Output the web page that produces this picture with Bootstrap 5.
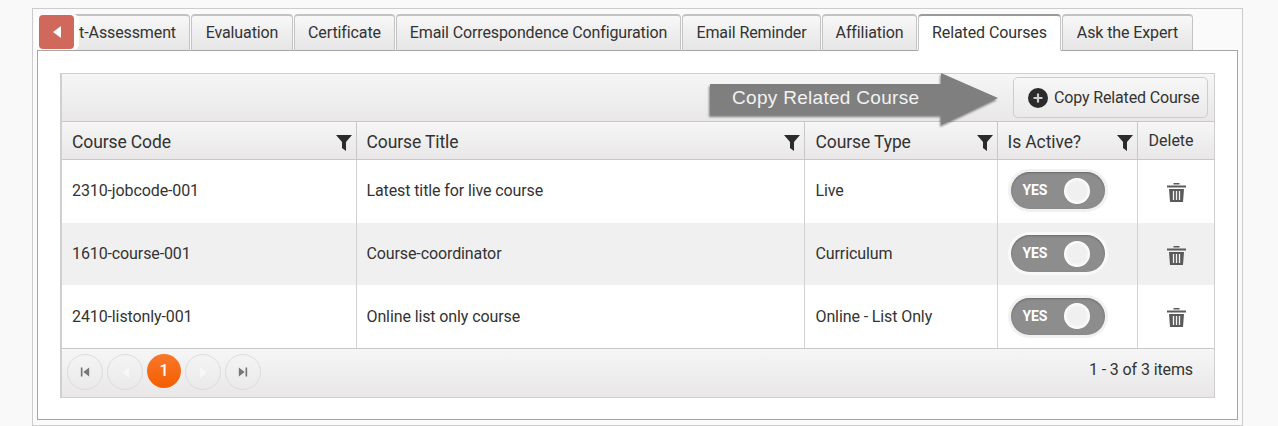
<!DOCTYPE html>
<html lang="en">
<head>
<meta charset="UTF-8">
<title>Related Courses</title>
<link rel="stylesheet" href="https://cdn.jsdelivr.net/npm/bootstrap@5.3.0/dist/css/bootstrap.min.css">
<style>
    html, body { height: 426px; overflow: hidden; }
    body { background: #f9f9f9; font-family: Roboto, sans-serif; color: #333; padding-top: 8px; letter-spacing: -.11px; }

    .outer-panel { position: relative; margin: 0 35px 0 32px; height: 418px; background: #fafafa; border: 1px solid #ccc; padding: 5px 4px 5px 4px; }

    /* tabs */
    .tab-strip { height: 36px; flex-wrap: nowrap; border: 0; padding-left: 3px; gap: 1px; }
    .tab-strip .nav-link { height: 37px; margin: 0; padding: 0 14px; display: flex; align-items: center; justify-content: center; white-space: nowrap; overflow: hidden; font-size: 16px; color: #333; background: linear-gradient(#f8f8f8, #e7e5e5); border: 1px solid #c4c4c4; border-top: 2px solid #c2c2c2; border-bottom: 1px solid #a5a5a5; border-radius: 4px 4px 0 0; }
    .tab-strip .nav-link.active { background: #fff; color: #333; border-color: #c4c4c4; border-top-color: #9a9a9a; border-bottom-color: #fff; position: relative; z-index: 2; }
    .tab-clip { width: 150px; justify-content: flex-end !important; padding-right: 13px !important; }
    .tab-eval { width: 102px; }
    .tab-cert { width: 101px; }
    .tab-mail { width: 285px; }
    .tab-remind { width: 139px; }
    .tab-aff { width: 95px; }
    .tab-rel { width: 143px; }
    .tab-ask { width: 131px; }

    .back-btn { position: absolute; left: 1px; top: 5px; width: 45px; height: 36px; background: #fff; opacity: 1; z-index: 3; border: 0; padding: 0 5px 0 5px; }
    .back-face { display: flex; align-items: center; justify-content: center; width: 35px; height: 34px; background: #d0695c; border-radius: 4px; }

    .tab-body { height: 370px; background: #fff; border: 1px solid #a5a5a5; padding: 22px 22px 0 22px; }

    /* grid */
    .grid-box { height: 325px; border: 1px solid #cfcfcf; border-left-width: 2px; position: relative; }
    .grid-bar { height: 48px; padding: 3px 6px 0 0; background: linear-gradient(#f6f6f6, #e9e7e8); border-bottom: 1px solid #c8c8c8; }
    .copy-btn { width: 195px; height: 41px; padding: 0 0 0 14px; gap: 6px; font-size: 16px; letter-spacing: -.15px; color: #333; background: linear-gradient(#f7f7f7, #ebe9ea); border: 1px solid #cdcdcd; border-radius: 5px; }

    .course-grid { table-layout: fixed; width: 100%; margin: 0; border-collapse: collapse; --bs-table-bg: transparent; color: #333; }
    .course-grid th { height: 37px; padding: 3px 10px 0 10px; font-size: 17.5px; font-weight: 400; color: #333; vertical-align: middle; background: linear-gradient(#f6f6f6, #e9e7e8); border-bottom: 1px solid #c8c8c8; border-right: 1px solid #c8c8c8; }
    .course-grid th:last-child, .course-grid td:last-child { border-right: 0; }
    .course-grid td { height: 63px; padding: 0 10px; font-size: 16px; vertical-align: middle; border-bottom: 0; border-right: 1px solid #d2d2d2; }
    .course-grid tbody tr:first-child td { height: 64px; }
    .course-grid tbody tr:nth-child(2) td { height: 62px; }
    .course-grid td:last-child { padding-left: 12px; }
    .course-grid th:nth-child(3), .course-grid td:nth-child(3) { padding-left: 11px; }
    .course-grid tbody tr:nth-child(even) td { background: #f0f0f0; }
    .course-grid th.th-small { font-size: 16px; padding: 2px 0 0 11px; letter-spacing: 0; }
    .col-code { width: 294px; }
    .col-title { width: 448px; }
    .col-type { width: 193px; }
    .col-active { width: 140px; }

    .th-inner { display: flex; align-items: center; justify-content: space-between; }
    .filter-ico { margin-right: -6px; margin-top: 3px; }

    .yes-toggle { display: flex; align-items: center; width: 94px; height: 37px; margin: 0 0 1px 3px; padding: 0 15px 0 12px; justify-content: space-between; border-radius: 19px; background: #8d8d8d; color: #fff; font-size: 14px; font-weight: 700; box-shadow: 0 0 0 3px #f1f1f1, inset 0 1px 2px rgba(0,0,0,.25); }
    .course-grid tbody tr:nth-child(even) .yes-toggle { box-shadow: 0 0 0 3px #f9f9f9, inset 0 1px 2px rgba(0,0,0,.25); }
    .yes-knob { width: 26px; height: 26px; border-radius: 50%; background: radial-gradient(circle, #f0f0f0 50%, #fff 70%); }

    .grid-foot { height: 49px; margin-top: 0; padding: 5px 21px 0 5px; background: linear-gradient(#f6f6f6, #e9e7e8); border-top: 1px solid #c8c8c8; font-size: 16px; }
    .grid-foot .pager-row { gap: 4px; }
    .pager-dot { width: 36px; height: 36px; border-radius: 50%; border: 1px solid #dcdcdc; display: flex; align-items: center; justify-content: center; }
    .pager-on { width: 34px; height: 34px; border: 0; background: linear-gradient(#f9782a, #f55d00); color: #fff; font-size: 16px; font-weight: 500; }
    .pager-count { line-height: 32px; }

    .callout { position: absolute; left: 646px; top: -1px; width: 292px; height: 58px; pointer-events: none; z-index: 4; }
    .callout svg { filter: drop-shadow(-1px 2px 1px rgba(0,0,0,.45)); }
    .callout-label { position: absolute; left: 24px; top: 12px; font-family: "Liberation Sans", sans-serif; font-size: 19px; letter-spacing: .3px; line-height: 26px; color: #f2f2f2; white-space: nowrap; }
</style>
</head>
<body>
<div class="outer-panel">
    <ul class="nav nav-tabs tab-strip">
        <li class="nav-item"><a class="nav-link tab-clip" href="#">Post-Assessment</a></li>
        <li class="nav-item"><a class="nav-link tab-eval" href="#">Evaluation</a></li>
        <li class="nav-item"><a class="nav-link tab-cert" href="#">Certificate</a></li>
        <li class="nav-item"><a class="nav-link tab-mail" href="#">Email Correspondence Configuration</a></li>
        <li class="nav-item"><a class="nav-link tab-remind" href="#">Email Reminder</a></li>
        <li class="nav-item"><a class="nav-link tab-aff" href="#">Affiliation</a></li>
        <li class="nav-item"><a class="nav-link active tab-rel" href="#">Related Courses</a></li>
        <li class="nav-item"><a class="nav-link tab-ask" href="#">Ask the Expert</a></li>
    </ul>
    <button class="btn back-btn" type="button" aria-label="Scroll back">
        <span class="back-face">
            <svg width="10" height="12" viewBox="0 0 10 12"><path d="M9 0v12L1 6z" fill="#fff"/></svg>
        </span>
    </button>

    <div class="tab-body">
        <div class="grid-box">
            <div class="grid-bar d-flex justify-content-end">
                <button class="btn copy-btn d-flex align-items-center" type="button">
                    <svg width="20" height="20" viewBox="0 0 20 20"><circle cx="10" cy="10" r="10" fill="#2b2b2b"/><path d="M10 5.500v9M5.500 10h9" stroke="#ccc" stroke-width="2.200"/></svg>
                    Copy Related Course
                </button>
            </div>

            <div class="callout">
                <svg width="292" height="58" viewBox="0 0 292 58">
                    <path d="M2 11h231V0l57 25-57 27V42H2z" fill="#7f7f7f"/>
                </svg>
                <span class="callout-label">Copy Related Course</span>
            </div>

            <table class="table course-grid">
                <colgroup>
                    <col class="col-code"><col class="col-title"><col class="col-type"><col class="col-active"><col>
                </colgroup>
                <thead>
                    <tr>
                        <th><div class="th-inner">Course Code <svg class="filter-ico" width="16" height="16" viewBox="0 0 16 16"><path d="M0 0h16L10 7v9l-4-3V7z" fill="#2b2b2b"/></svg></div></th>
                        <th><div class="th-inner">Course Title <svg class="filter-ico" width="16" height="16" viewBox="0 0 16 16"><path d="M0 0h16L10 7v9l-4-3V7z" fill="#2b2b2b"/></svg></div></th>
                        <th><div class="th-inner">Course Type <svg class="filter-ico" width="16" height="16" viewBox="0 0 16 16"><path d="M0 0h16L10 7v9l-4-3V7z" fill="#2b2b2b"/></svg></div></th>
                        <th><div class="th-inner">Is Active? <svg class="filter-ico" width="16" height="16" viewBox="0 0 16 16"><path d="M0 0h16L10 7v9l-4-3V7z" fill="#2b2b2b"/></svg></div></th>
                        <th class="th-small">Delete</th>
                    </tr>
                </thead>
                <tbody>
                    <tr>
                        <td>2310-jobcode-001</td>
                        <td>Latest title for live course</td>
                        <td>Live</td>
                        <td><div class="yes-toggle">YES<span class="yes-knob"></span></div></td>
                        <td class="text-center"><svg width="19" height="20" viewBox="0 0 19 20"><path d="M6.500 2.500V1h6v1.500M0 3.500h19v2H0zM2 7h15l-1 13H3z" fill="#5a5a5a"/><path d="M6.500 9v9M9.500 9v9M12.500 9v9" stroke="#f4f4f4" stroke-width="1.300"/></svg></td>
                    </tr>
                    <tr>
                        <td>1610-course-001</td>
                        <td>Course-coordinator</td>
                        <td>Curriculum</td>
                        <td><div class="yes-toggle">YES<span class="yes-knob"></span></div></td>
                        <td class="text-center"><svg width="19" height="20" viewBox="0 0 19 20"><path d="M6.500 2.500V1h6v1.500M0 3.500h19v2H0zM2 7h15l-1 13H3z" fill="#5a5a5a"/><path d="M6.500 9v9M9.500 9v9M12.500 9v9" stroke="#f4f4f4" stroke-width="1.300"/></svg></td>
                    </tr>
                    <tr>
                        <td>2410-listonly-001</td>
                        <td>Online list only course</td>
                        <td>Online - List Only</td>
                        <td><div class="yes-toggle">YES<span class="yes-knob"></span></div></td>
                        <td class="text-center"><svg width="19" height="20" viewBox="0 0 19 20"><path d="M6.500 2.500V1h6v1.500M0 3.500h19v2H0zM2 7h15l-1 13H3z" fill="#5a5a5a"/><path d="M6.500 9v9M9.500 9v9M12.500 9v9" stroke="#f4f4f4" stroke-width="1.300"/></svg></td>
                    </tr>
                </tbody>
            </table>

            <div class="grid-foot d-flex justify-content-between">
                <div class="d-flex pager-row">
                    <span class="pager-dot"><svg width="10" height="10" viewBox="0 0 12 11"><path d="M1 0h2v11H1zM11 0v11L4 5.500z" fill="#777"/></svg></span>
                    <span class="pager-dot"><svg width="9" height="11" viewBox="0 0 9 11"><path d="M8 0v11L1 5.500z" fill="#f7f7f7"/></svg></span>
                    <span class="pager-dot pager-on">1</span>
                    <span class="pager-dot"><svg width="9" height="11" viewBox="0 0 9 11"><path d="M1 0v11l7-5.500z" fill="#f7f7f7"/></svg></span>
                    <span class="pager-dot"><svg width="10" height="10" viewBox="0 0 12 11"><path d="M1 0v11l7-5.500zM9 0h2v11H9z" fill="#777"/></svg></span>
                </div>
                <div class="pager-count">1 - 3 of 3 items</div>
            </div>
        </div>
    </div>
</div>
</body>
</html>
